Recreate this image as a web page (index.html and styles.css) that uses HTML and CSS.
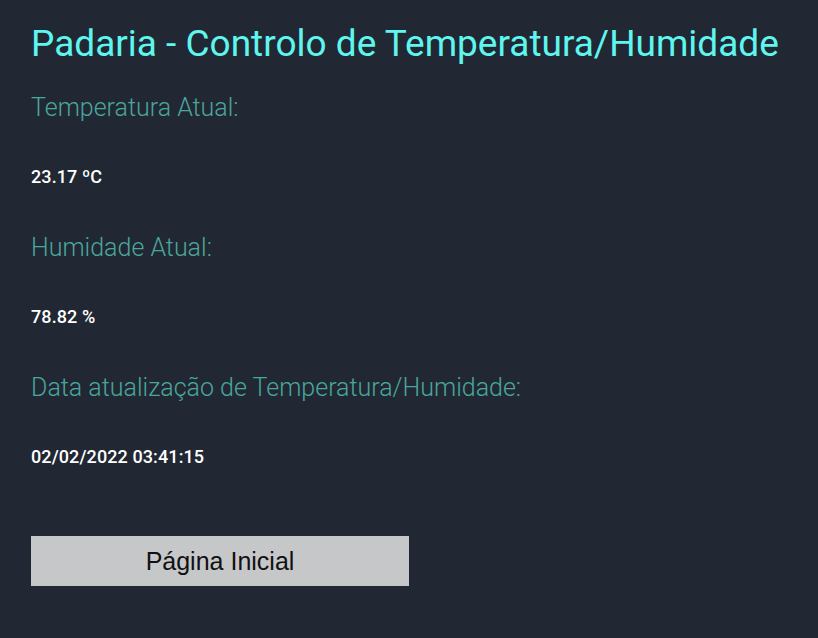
FILE: index.html
```html
<!DOCTYPE html>
<html lang="pt">
<head>
<meta charset="utf-8">
<title>Padaria</title>
<link rel="stylesheet" href="styles.css">
</head>
<body>
<main class="page">
  <h1 class="title">Padaria - Controlo de Temperatura/Humidade</h1>
  <section class="field">
    <h2 class="label">Temperatura Atual:</h2>
    <p class="value">23.17 ºC</p>
  </section>
  <section class="field">
    <h2 class="label">Humidade Atual:</h2>
    <p class="value">78.82 %</p>
  </section>
  <section class="field">
    <h2 class="label">Data atualização de Temperatura/Humidade:</h2>
    <p class="value">02/02/2022 03:41:15</p>
  </section>
  <button class="btn" type="button">Página Inicial</button>
</main>
</body>
</html>
```
FILE: styles.css
```css
html, body {
  margin: 0;
  padding: 0;
  background: #212833;
  height: 100%;
}
.page {
  padding: 22px 31px;
  font-family: Roboto, "Liberation Sans", sans-serif;
  display: flex;
  flex-direction: column;
  align-items: flex-start;
}
.title {
  margin: 0;
  font-size: 37px;
  font-weight: 400;
  color: #5ef6ee;
  line-height: 44px;
}
.field {
  display: flex;
  flex-direction: column;
}
.label {
  margin: 27px 0 0;
  font-size: 25px;
  font-weight: 300;
  color: #4aa69c;
  line-height: 30px;
}
.field + .field .label {
  margin-top: 44px;
}
.value {
  margin: 42px 0 0;
  font-size: 18px;
  font-weight: 500;
  color: #ffffff;
  line-height: 24px;
  letter-spacing: 0.1px;
}
.btn {
  margin-top: 67px;
  width: 378px;
  height: 50px;
  border: none;
  background: #c6c7c9;
  color: #111111;
  font-family: "Liberation Sans", Arial, sans-serif;
  font-size: 25px;
  padding: 0;
}
```
